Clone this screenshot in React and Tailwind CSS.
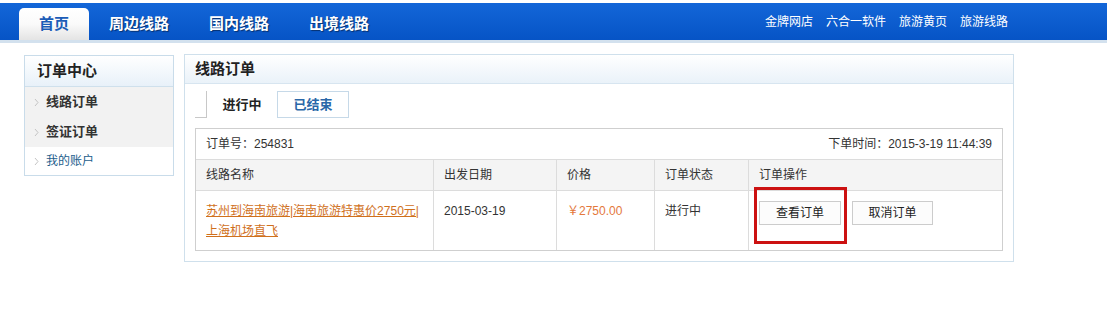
import React from "react";

const F = { fontFamily: '"Liberation Sans","Noto Sans CJK SC",sans-serif' };

function Chevron() {
  return (
    <svg width="5" height="9" viewBox="0 0 5 9" className="mr-[7px]">
      <path d="M1 1l3 3.5L1 8" fill="none" stroke="#c4c4c4" strokeWidth="1" />
    </svg>
  );
}

export default function App() {
  return (
    <div className="w-[1107px] h-[322px] bg-white text-[#333]" style={F}>
      <div className="h-[3px] bg-white" />
      <div className="h-[37px] bg-gradient-to-b from-[#1366d8] to-[#0654c6] flex items-end">
        <div className="ml-[19px] w-[70px] h-[32px] rounded-t-[5px] bg-gradient-to-b from-white via-[#fafafa] to-[#e4e4e4] flex items-center justify-center text-[15px] font-bold text-[#1b5cb7]">
          首页
        </div>
        {["周边线路", "国内线路", "出境线路"].map((t) => (
          <div
            key={t}
            className="w-[100px] h-[32px] flex items-center justify-center text-[15px] font-bold text-white [text-shadow:1px_1px_1px_rgba(0,0,0,0.45)]"
          >
            {t}
          </div>
        ))}
        <div className="ml-auto mr-[99px] h-[37px] flex items-center gap-[13px] text-[12px] text-white">
          {["金牌网店", "六合一软件", "旅游黄页", "旅游线路"].map((t) => (
            <span key={t}>{t}</span>
          ))}
        </div>
      </div>
      <div className="h-[3px] bg-[#d3e1ee]" />

      <div className="flex items-start mt-[11px]">
        {/* sidebar */}
        <div className="ml-[24px] mt-[1px] w-[150px] border border-[#c9dcea]">
          <div className="h-[31px] border-b border-[#cfe0ec] bg-gradient-to-b from-white to-[#e8f1f9] flex items-center pl-[12px] text-[15px] font-bold text-[#222]">
            订单中心
          </div>
          <div className="bg-[#f2f2f2]">
            <div className="h-[30px] flex items-center pl-[9px] text-[13px] font-bold text-[#333]">
              <Chevron />
              线路订单
            </div>
            <div className="h-[30px] flex items-center pl-[9px] text-[13px] font-bold text-[#333]">
              <Chevron />
              签证订单
            </div>
          </div>
          <div className="h-[28px] flex items-center pl-[9px] text-[12px] text-[#1c5d8c]">
            <Chevron />
            我的账户
          </div>
        </div>

        {/* main panel */}
        <div className="ml-[10px] w-[830px] border border-[#cfe0ec]">
          <div className="h-[29px] border-b border-[#d7e5f0] bg-gradient-to-b from-white to-[#eaf2f9] flex items-center pl-[10px] text-[15px] font-bold text-[#222]">
            线路订单
          </div>
          <div className="px-[10px] pb-[10px]">
            <div className="flex items-end mt-[7px] h-[27px]">
              <div className="w-[11px] border-b border-[#c8c8c8]" />
              <div className="w-[71px] h-[27px] border-l border-[#c8c8c8] flex items-center justify-center text-[13px] font-bold text-[#222]">
                进行中
              </div>
              <div className="w-[72px] h-[27px] border border-[#c6d9e8] flex items-center justify-center text-[13px] font-bold text-[#2a67a8]">
                已结束
              </div>
            </div>

            <div className="mt-[10px] border border-[#cfcfcf] text-[12px] text-[#333]">
              <div className="h-[30px] flex items-center justify-between px-[10px]">
                <span>订单号：254831</span>
                <span>下单时间：2015-3-19 11:44:39</span>
              </div>
              <div className="flex h-[32px] bg-[#f4f4f4] border-y border-[#dcdcdc]">
                <div className="w-[237px] flex items-center pl-[10px]">线路名称</div>
                <div className="w-[123px] flex items-center pl-[10px] border-l border-[#dcdcdc]">出发日期</div>
                <div className="w-[98px] flex items-center pl-[10px] border-l border-[#dcdcdc]">价格</div>
                <div className="w-[94px] flex items-center pl-[10px] border-l border-[#dcdcdc]">订单状态</div>
                <div className="flex-1 flex items-center pl-[10px] border-l border-[#dcdcdc]">订单操作</div>
              </div>
              <div className="flex h-[59px]">
                <div className="w-[237px] pl-[10px] pt-[10px] leading-[20px]">
                  <a className="underline text-[#d0701c]">
                    苏州到海南旅游|海南旅游特惠价2750元|
                    <br />
                    上海机场直飞
                  </a>
                </div>
                <div className="w-[123px] pl-[10px] pt-[10px] leading-[20px] border-l border-[#dcdcdc]">2015-03-19</div>
                <div className="w-[98px] pl-[10px] pt-[10px] leading-[20px] border-l border-[#dcdcdc] text-[#e4783c]">￥2750.00</div>
                <div className="w-[94px] pl-[10px] pt-[10px] leading-[20px] border-l border-[#dcdcdc]">进行中</div>
                <div className="flex-1 relative pl-[10px] pt-[10px] border-l border-[#dcdcdc] flex items-start gap-[11px]">
                  <button className="w-[82px] h-[24px] border border-[#cccccc] bg-[#fcfcfc] text-[12px] text-[#222]">查看订单</button>
                  <button className="w-[81px] h-[24px] border border-[#cccccc] bg-[#fcfcfc] text-[12px] text-[#222]">取消订单</button>
                  <div className="absolute left-[5px] top-[-4px] w-[93px] h-[57px] border-[3px] border-[#cc1111]" />
                </div>
              </div>
            </div>
          </div>
        </div>
      </div>
    </div>
  );
}
